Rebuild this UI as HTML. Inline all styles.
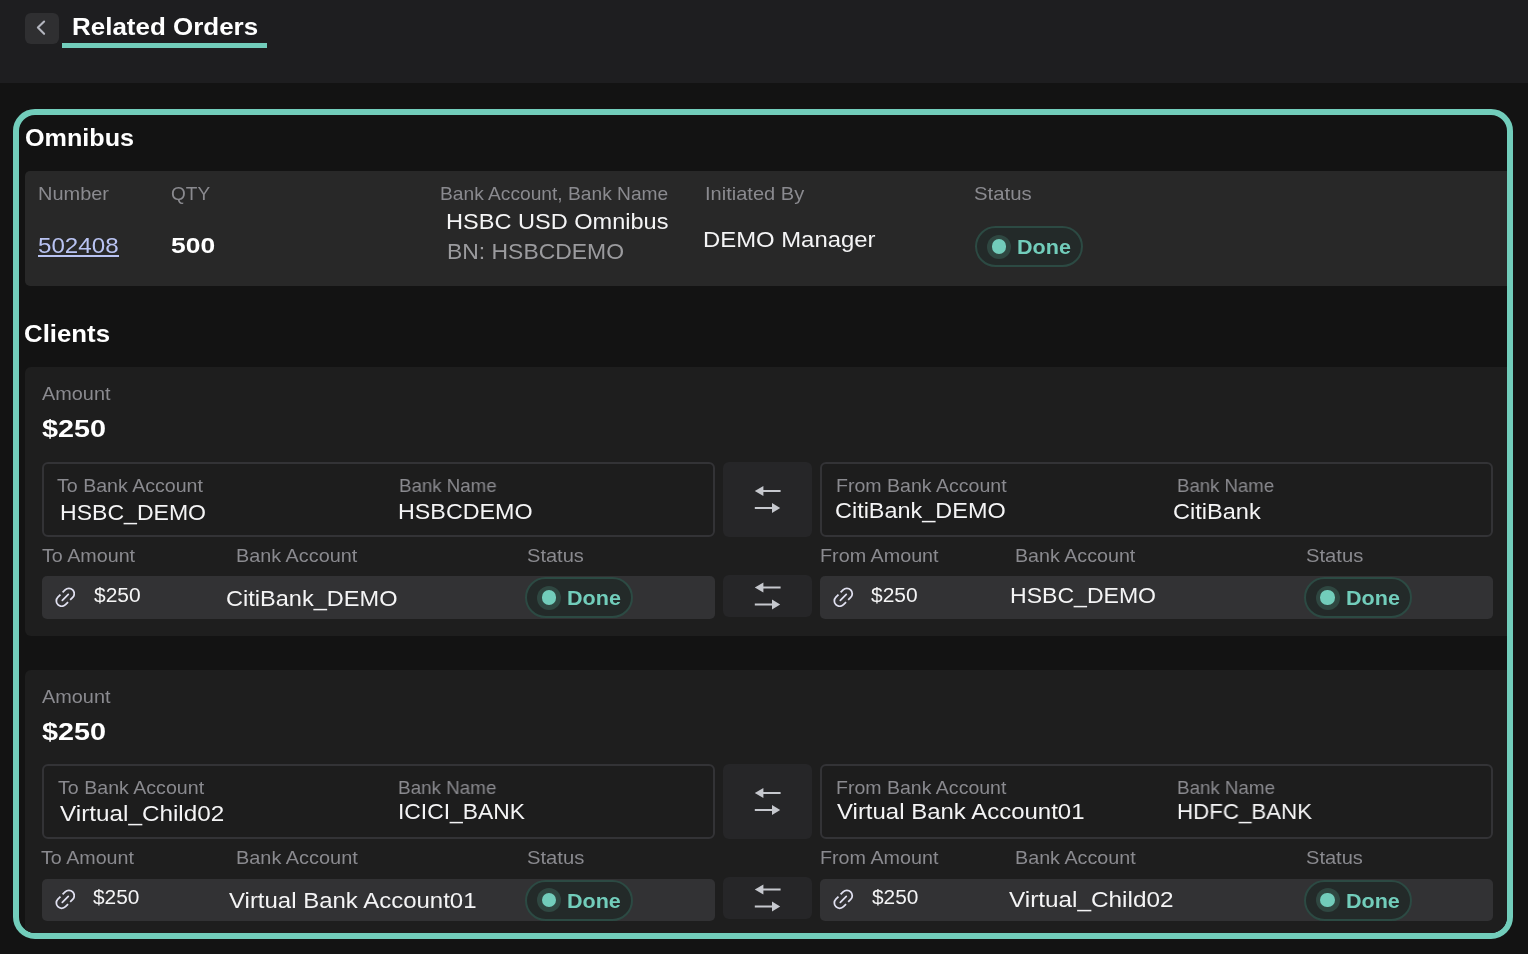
<!DOCTYPE html>
<html><head><meta charset="utf-8"><style>
html,body{margin:0;padding:0;}
body{width:1528px;height:954px;background:#131313;position:relative;overflow:hidden;font-family:"Liberation Sans",sans-serif;}
.t{position:absolute;white-space:nowrap;transform-origin:0 0;will-change:transform;}
.b{position:absolute;}
#wrap{position:absolute;left:13px;top:109px;width:1488px;height:818px;border:6px solid #72cdbb;border-radius:22px;overflow:hidden;}
#inner{position:absolute;left:-19px;top:-115px;width:1528px;height:954px;}
</style></head><body>
<div class="b" style="left:0px;top:0px;width:1528px;height:83px;background:#1e1e20;border-radius:0px;"></div><div class="b" style="left:25px;top:13px;width:34px;height:31px;background:#2f2f31;border-radius:6px;"></div><svg class="b" style="left:25px;top:13px" width="34" height="31" viewBox="0 0 34 31"><path d="M19.1 8.5L12.9 14.6L19.1 20.8" fill="none" stroke="#b4b6bf" stroke-width="2.1" stroke-linecap="round" stroke-linejoin="round"/></svg><div class="t" style="left:72.20px;top:15.20px;font-size:24px;line-height:24px;color:#ffffff;font-weight:700;transform:scaleX(1.0818);">Related Orders</div><div class="b" style="left:62px;top:43px;width:205px;height:5px;background:#72cdbb;border-radius:0px;"></div>
<div id="wrap"><div id="inner">
<div class="t" style="left:24.56px;top:126.20px;font-size:24.5px;line-height:24.5px;color:#ffffff;font-weight:700;transform:scaleX(1.0272);">Omnibus</div><div class="b" style="left:25px;top:171px;width:1500px;height:115px;background:#282828;border-radius:5px;"></div><div class="t" style="left:38.20px;top:184.10px;font-size:19px;line-height:19px;color:#8a8a8f;transform:scaleX(1.0505);">Number</div><div class="t" style="left:170.84px;top:184.10px;font-size:19px;line-height:19px;color:#8a8a8f;">QTY</div><div class="t" style="left:439.70px;top:184.10px;font-size:19px;line-height:19px;color:#8a8a8f;transform:scaleX(1.0099);">Bank Account, Bank Name</div><div class="t" style="left:705.46px;top:184.10px;font-size:19px;line-height:19px;color:#8a8a8f;transform:scaleX(1.0549);">Initiated By</div><div class="t" style="left:974.12px;top:184.10px;font-size:19px;line-height:19px;color:#8a8a8f;transform:scaleX(1.0712);">Status</div><div class="t" style="left:37.62px;top:235.10px;font-size:22px;line-height:22px;color:#b9c3f2;transform:scaleX(1.0976);">502408</div><div class="b" style="left:37.9px;top:255px;width:81.4px;height:2px;background:#b9c3f2;border-radius:0px;"></div><div class="t" style="left:171.20px;top:235.00px;font-size:22px;line-height:22px;color:#ffffff;font-weight:700;transform:scaleX(1.2016);">500</div><div class="t" style="left:445.68px;top:211.20px;font-size:22.5px;line-height:22.5px;color:#f4f4f5;transform:scaleX(1.0465);">HSBC USD Omnibus</div><div class="t" style="left:447.04px;top:241.00px;font-size:22.5px;line-height:22.5px;color:#9b9b9e;transform:scaleX(1.0184);">BN: HSBCDEMO</div><div class="t" style="left:702.96px;top:229.40px;font-size:22.5px;line-height:22.5px;color:#f4f4f5;transform:scaleX(1.0608);">DEMO Manager</div><div class="b" style="left:975px;top:226px;width:104px;height:37px;border:2px solid #2c4a43;background:#232a29;border-radius:41px;"></div><div class="b" style="left:987px;top:234.5px;width:24px;height:24px;border-radius:50%;background:#2f4741;"></div><div class="b" style="left:991.8px;top:239.3px;width:14.4px;height:14.4px;border-radius:50%;background:#72cdbb;"></div><div class="t" style="left:1017.48px;top:236.00px;font-size:21px;line-height:21px;color:#72cdbb;font-weight:700;transform:scaleX(1.0262);">Done</div><div class="t" style="left:24.38px;top:322.20px;font-size:24.5px;line-height:24.5px;color:#ffffff;font-weight:700;transform:scaleX(1.0531);">Clients</div><div class="b" style="left:25px;top:367px;width:1500px;height:269px;background:#1e1e1e;border-radius:6px;"></div><div class="t" style="left:41.64px;top:384.10px;font-size:19px;line-height:19px;color:#8a8a8f;transform:scaleX(1.0462);">Amount</div><div class="t" style="left:42.36px;top:416.60px;font-size:24.5px;line-height:24.5px;color:#ffffff;font-weight:700;transform:scaleX(1.1746);">$250</div><div class="b" style="left:42px;top:462px;width:668.5px;height:71px;background:#1d1d1d;border-radius:6px;border:2px solid #333336;"></div><div class="b" style="left:723px;top:462px;width:89px;height:75px;background:#262628;border-radius:6px;"></div><svg class="b" style="left:723px;top:462px" width="89" height="75" viewBox="0 0 89 75"><g fill="#c6c8ce"><path d="M31.8 29.00L40.4 24.00V34.00Z"/><rect x="39" y="28.00" width="18.6" height="2"/><path d="M57.2 46.00L49 41.00V51.00Z"/><rect x="31.8" y="45.00" width="18.6" height="2"/></g></svg><div class="b" style="left:820px;top:462px;width:669px;height:71px;background:#1d1d1d;border-radius:6px;border:2px solid #333336;"></div><div class="t" style="left:57.36px;top:476.00px;font-size:19px;line-height:19px;color:#8a8a8f;transform:scaleX(1.0308);">To Bank Account</div><div class="t" style="left:398.56px;top:475.90px;font-size:19px;line-height:19px;color:#8a8a8f;transform:scaleX(0.9836);">Bank Name</div><div class="t" style="left:835.62px;top:476.30px;font-size:19px;line-height:19px;color:#8a8a8f;transform:scaleX(1.0290);">From Bank Account</div><div class="t" style="left:1176.98px;top:475.90px;font-size:19px;line-height:19px;color:#8a8a8f;transform:scaleX(0.9786);">Bank Name</div><div class="t" style="left:59.56px;top:502.20px;font-size:22.5px;line-height:22.5px;color:#f4f4f5;transform:scaleX(1.0247);">HSBC_DEMO</div><div class="t" style="left:398.48px;top:501.10px;font-size:22.5px;line-height:22.5px;color:#f4f4f5;transform:scaleX(1.0356);">HSBCDEMO</div><div class="t" style="left:834.62px;top:499.80px;font-size:22.5px;line-height:22.5px;color:#f4f4f5;transform:scaleX(1.0423);">CitiBank_DEMO</div><div class="t" style="left:1172.62px;top:501.30px;font-size:22.5px;line-height:22.5px;color:#f4f4f5;transform:scaleX(1.0475);">CitiBank</div><div class="t" style="left:41.64px;top:546.30px;font-size:19px;line-height:19px;color:#8a8a8f;transform:scaleX(1.0370);">To Amount</div><div class="t" style="left:235.70px;top:546.30px;font-size:19px;line-height:19px;color:#8a8a8f;transform:scaleX(1.0432);">Bank Account</div><div class="t" style="left:527.12px;top:546.30px;font-size:19px;line-height:19px;color:#8a8a8f;transform:scaleX(1.0561);">Status</div><div class="t" style="left:820.20px;top:546.30px;font-size:19px;line-height:19px;color:#8a8a8f;transform:scaleX(1.0400);">From Amount</div><div class="t" style="left:1015.20px;top:546.30px;font-size:19px;line-height:19px;color:#8a8a8f;transform:scaleX(1.0354);">Bank Account</div><div class="t" style="left:1306.34px;top:546.30px;font-size:19px;line-height:19px;color:#8a8a8f;transform:scaleX(1.0637);">Status</div><div class="b" style="left:42px;top:576px;width:672.5px;height:43px;background:#323234;border-radius:5px;"></div><div class="b" style="left:723px;top:575px;width:89px;height:42px;background:#262628;border-radius:6px;"></div><svg class="b" style="left:723px;top:575px" width="89" height="42" viewBox="0 0 89 42"><g fill="#c6c8ce"><path d="M31.8 12.50L40.4 7.50V17.50Z"/><rect x="39" y="11.50" width="18.6" height="2"/><path d="M57.2 29.50L49 24.50V34.50Z"/><rect x="31.8" y="28.50" width="18.6" height="2"/></g></svg><div class="b" style="left:820px;top:576px;width:673px;height:43px;background:#323234;border-radius:5px;"></div><svg class="b" style="left:54.9px;top:586.8px" width="20.6" height="20.6" viewBox="0 0 20 20"><g transform="rotate(45 10 10)" fill="none" stroke="#e0e0f0" stroke-width="1.7"><path d="M4.8 8.5V5.05A5.2 5.2 0 0 1 15.2 5.05V8.5"/><path d="M4.8 11.4V14.95A5.2 5.2 0 0 0 15.2 14.95V11.4"/><path d="M10 5.9V14.1" stroke-linecap="round"/></g></svg><div class="t" style="left:93.72px;top:584.50px;font-size:20px;line-height:20px;color:#f4f4f5;transform:scaleX(1.0481);">$250</div><svg class="b" style="left:833.0px;top:586.8px" width="20.6" height="20.6" viewBox="0 0 20 20"><g transform="rotate(45 10 10)" fill="none" stroke="#e0e0f0" stroke-width="1.7"><path d="M4.8 8.5V5.05A5.2 5.2 0 0 1 15.2 5.05V8.5"/><path d="M4.8 11.4V14.95A5.2 5.2 0 0 0 15.2 14.95V11.4"/><path d="M10 5.9V14.1" stroke-linecap="round"/></g></svg><div class="t" style="left:871.42px;top:584.50px;font-size:20px;line-height:20px;color:#f4f4f5;transform:scaleX(1.0481);">$250</div><div class="t" style="left:226.26px;top:587.50px;font-size:22.5px;line-height:22.5px;color:#f4f4f5;transform:scaleX(1.0472);">CitiBank_DEMO</div><div class="t" style="left:1009.98px;top:585.40px;font-size:22.5px;line-height:22.5px;color:#f4f4f5;transform:scaleX(1.0247);">HSBC_DEMO</div><div class="b" style="left:525px;top:577.0px;width:104px;height:37px;border:2px solid #2c4a43;background:#232a29;border-radius:41px;"></div><div class="b" style="left:537px;top:585.5px;width:24px;height:24px;border-radius:50%;background:#2f4741;"></div><div class="b" style="left:541.8px;top:590.3px;width:14.4px;height:14.4px;border-radius:50%;background:#72cdbb;"></div><div class="t" style="left:567.48px;top:587.00px;font-size:21px;line-height:21px;color:#72cdbb;font-weight:700;transform:scaleX(1.0262);">Done</div><div class="b" style="left:1303.5px;top:577.0px;width:104px;height:37px;border:2px solid #2c4a43;background:#232a29;border-radius:41px;"></div><div class="b" style="left:1315.5px;top:585.5px;width:24px;height:24px;border-radius:50%;background:#2f4741;"></div><div class="b" style="left:1320.3px;top:590.3px;width:14.4px;height:14.4px;border-radius:50%;background:#72cdbb;"></div><div class="t" style="left:1345.98px;top:587.00px;font-size:21px;line-height:21px;color:#72cdbb;font-weight:700;transform:scaleX(1.0262);">Done</div><div class="b" style="left:25px;top:670px;width:1500px;height:269px;background:#1e1e1e;border-radius:6px;"></div><div class="t" style="left:41.64px;top:687.10px;font-size:19px;line-height:19px;color:#8a8a8f;transform:scaleX(1.0460);">Amount</div><div class="t" style="left:42.36px;top:719.60px;font-size:24.5px;line-height:24.5px;color:#ffffff;font-weight:700;transform:scaleX(1.1746);">$250</div><div class="b" style="left:42px;top:764px;width:668.5px;height:71px;background:#1d1d1d;border-radius:6px;border:2px solid #333336;"></div><div class="b" style="left:723px;top:764px;width:89px;height:75px;background:#262628;border-radius:6px;"></div><svg class="b" style="left:723px;top:764px" width="89" height="75" viewBox="0 0 89 75"><g fill="#c6c8ce"><path d="M31.8 29.00L40.4 24.00V34.00Z"/><rect x="39" y="28.00" width="18.6" height="2"/><path d="M57.2 46.00L49 41.00V51.00Z"/><rect x="31.8" y="45.00" width="18.6" height="2"/></g></svg><div class="b" style="left:820px;top:764px;width:669px;height:71px;background:#1d1d1d;border-radius:6px;border:2px solid #333336;"></div><div class="t" style="left:57.52px;top:778.00px;font-size:19px;line-height:19px;color:#8a8a8f;transform:scaleX(1.0322);">To Bank Account</div><div class="t" style="left:397.92px;top:777.90px;font-size:19px;line-height:19px;color:#8a8a8f;transform:scaleX(0.9917);">Bank Name</div><div class="t" style="left:835.94px;top:778.30px;font-size:19px;line-height:19px;color:#8a8a8f;transform:scaleX(1.0278);">From Bank Account</div><div class="t" style="left:1177.46px;top:777.90px;font-size:19px;line-height:19px;color:#8a8a8f;transform:scaleX(0.9867);">Bank Name</div><div class="t" style="left:59.64px;top:803.10px;font-size:22.5px;line-height:22.5px;color:#f4f4f5;transform:scaleX(1.0790);">Virtual_Child02</div><div class="t" style="left:397.68px;top:801.00px;font-size:22.5px;line-height:22.5px;color:#f4f4f5;transform:scaleX(1.0147);">ICICI_BANK</div><div class="t" style="left:836.64px;top:800.80px;font-size:22.5px;line-height:22.5px;color:#f4f4f5;transform:scaleX(1.0657);">Virtual Bank Account01</div><div class="t" style="left:1177.48px;top:801.00px;font-size:22.5px;line-height:22.5px;color:#f4f4f5;transform:scaleX(0.9911);">HDFC_BANK</div><div class="t" style="left:41.48px;top:848.30px;font-size:19px;line-height:19px;color:#8a8a8f;transform:scaleX(1.0347);">To Amount</div><div class="t" style="left:235.70px;top:848.30px;font-size:19px;line-height:19px;color:#8a8a8f;transform:scaleX(1.0484);">Bank Account</div><div class="t" style="left:527.44px;top:848.30px;font-size:19px;line-height:19px;color:#8a8a8f;transform:scaleX(1.0635);">Status</div><div class="t" style="left:820.20px;top:848.30px;font-size:19px;line-height:19px;color:#8a8a8f;transform:scaleX(1.0382);">From Amount</div><div class="t" style="left:1015.20px;top:848.30px;font-size:19px;line-height:19px;color:#8a8a8f;transform:scaleX(1.0388);">Bank Account</div><div class="t" style="left:1306.18px;top:848.30px;font-size:19px;line-height:19px;color:#8a8a8f;transform:scaleX(1.0559);">Status</div><div class="b" style="left:42px;top:879px;width:672.5px;height:42px;background:#323234;border-radius:5px;"></div><div class="b" style="left:723px;top:877px;width:89px;height:42px;background:#262628;border-radius:6px;"></div><svg class="b" style="left:723px;top:877px" width="89" height="42" viewBox="0 0 89 42"><g fill="#c6c8ce"><path d="M31.8 12.50L40.4 7.50V17.50Z"/><rect x="39" y="11.50" width="18.6" height="2"/><path d="M57.2 29.50L49 24.50V34.50Z"/><rect x="31.8" y="28.50" width="18.6" height="2"/></g></svg><div class="b" style="left:820px;top:879px;width:673px;height:42px;background:#323234;border-radius:5px;"></div><svg class="b" style="left:54.9px;top:889.1999999999999px" width="20.6" height="20.6" viewBox="0 0 20 20"><g transform="rotate(45 10 10)" fill="none" stroke="#e0e0f0" stroke-width="1.7"><path d="M4.8 8.5V5.05A5.2 5.2 0 0 1 15.2 5.05V8.5"/><path d="M4.8 11.4V14.95A5.2 5.2 0 0 0 15.2 14.95V11.4"/><path d="M10 5.9V14.1" stroke-linecap="round"/></g></svg><div class="t" style="left:93.24px;top:886.50px;font-size:20px;line-height:20px;color:#f4f4f5;transform:scaleX(1.0434);">$250</div><svg class="b" style="left:833.0px;top:889.1999999999999px" width="20.6" height="20.6" viewBox="0 0 20 20"><g transform="rotate(45 10 10)" fill="none" stroke="#e0e0f0" stroke-width="1.7"><path d="M4.8 8.5V5.05A5.2 5.2 0 0 1 15.2 5.05V8.5"/><path d="M4.8 11.4V14.95A5.2 5.2 0 0 0 15.2 14.95V11.4"/><path d="M10 5.9V14.1" stroke-linecap="round"/></g></svg><div class="t" style="left:871.74px;top:886.50px;font-size:20px;line-height:20px;color:#f4f4f5;transform:scaleX(1.0434);">$250</div><div class="t" style="left:228.64px;top:889.90px;font-size:22.5px;line-height:22.5px;color:#f4f4f5;transform:scaleX(1.0657);">Virtual Bank Account01</div><div class="t" style="left:1008.50px;top:889.10px;font-size:22.5px;line-height:22.5px;color:#f4f4f5;transform:scaleX(1.0810);">Virtual_Child02</div><div class="b" style="left:525px;top:879.5px;width:104px;height:37px;border:2px solid #2c4a43;background:#232a29;border-radius:41px;"></div><div class="b" style="left:537px;top:888.0px;width:24px;height:24px;border-radius:50%;background:#2f4741;"></div><div class="b" style="left:541.8px;top:892.8px;width:14.4px;height:14.4px;border-radius:50%;background:#72cdbb;"></div><div class="t" style="left:567.48px;top:889.50px;font-size:21px;line-height:21px;color:#72cdbb;font-weight:700;transform:scaleX(1.0257);">Done</div><div class="b" style="left:1303.5px;top:879.5px;width:104px;height:37px;border:2px solid #2c4a43;background:#232a29;border-radius:41px;"></div><div class="b" style="left:1315.5px;top:888.0px;width:24px;height:24px;border-radius:50%;background:#2f4741;"></div><div class="b" style="left:1320.3px;top:892.8px;width:14.4px;height:14.4px;border-radius:50%;background:#72cdbb;"></div><div class="t" style="left:1345.98px;top:889.50px;font-size:21px;line-height:21px;color:#72cdbb;font-weight:700;transform:scaleX(1.0257);">Done</div>
</div></div>
</body></html>
